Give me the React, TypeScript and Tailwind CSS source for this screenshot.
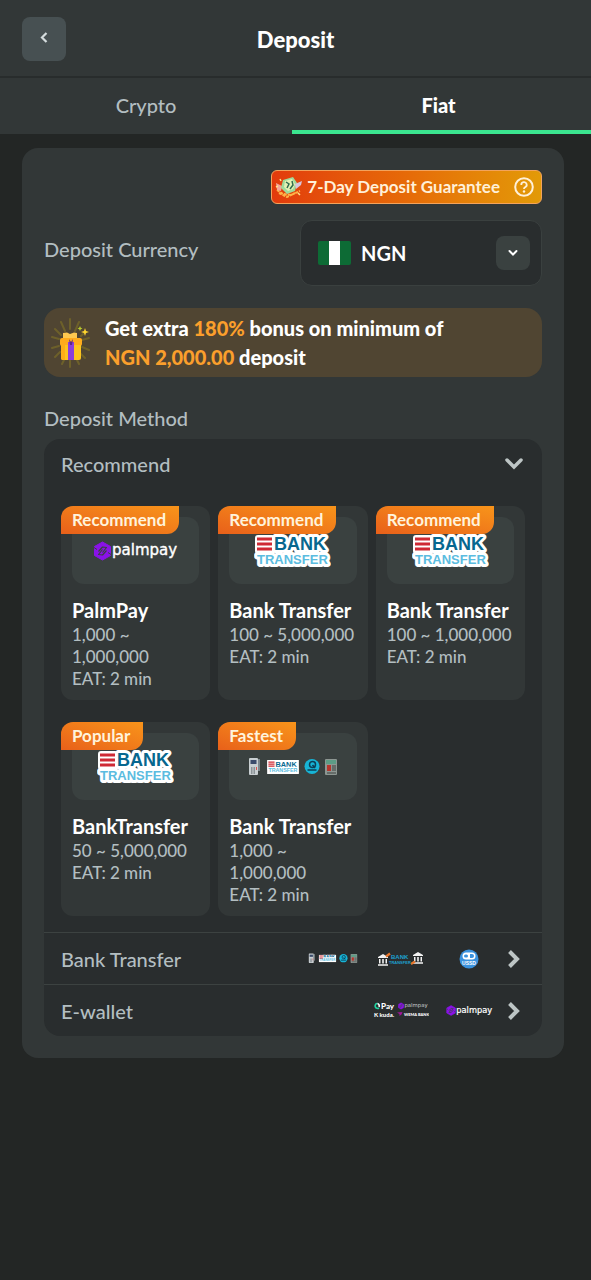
import React, { useState } from "react";

type LogoName = "palmpay" | "bank" | "channels" | "bankWire" | "ussd" | "wallets";

interface Method {
  id: number;
  tag: string;
  name: string;
  limits: string;
  eat: string;
  logo: LogoName;
}

const methods: Method[] = [
  { id: 1, tag: "Recommend", name: "PalmPay", limits: "1,000 ~ 1,000,000", eat: "2 min", logo: "palmpay" },
  { id: 2, tag: "Recommend", name: "Bank Transfer", limits: "100 ~ 5,000,000", eat: "2 min", logo: "bank" },
  { id: 3, tag: "Recommend", name: "Bank Transfer", limits: "100 ~ 1,000,000", eat: "2 min", logo: "bank" },
  { id: 4, tag: "Popular", name: "BankTransfer", limits: "50 ~ 5,000,000", eat: "2 min", logo: "bank" },
  { id: 5, tag: "Fastest", name: "Bank Transfer", limits: "1,000 ~ 1,000,000", eat: "2 min", logo: "channels" },
];

const groups: { name: string; logos: LogoName[] }[] = [
  { name: "Bank Transfer", logos: ["channels", "bankWire", "ussd"] },
  { name: "E-wallet", logos: ["wallets", "palmpay"] },
];

const PalmPayMark: React.FC = () => (
  <g>
    <path d="M8.5 1 16.5 5.5V14.5L8.5 19 .5 14.5V5.5Z" fill="#8a12e8" stroke="#8a12e8" strokeLinejoin="round" />
    <path
      d="M4.500 10.500 8.500 6 12.500 6.500 8.500 11.500M12.500 9.500 8.500 14 4.500 13.500 8.500 8.500"
      fill="none"
      stroke="#39413f"
      strokeWidth="1.200"
      strokeLinejoin="round"
    />
    <path d="M0 6.500 3 8.500M17 13.500 14 11.500" stroke="#39413f" strokeWidth="1" />
  </g>
);

const PalmPayLogo: React.FC<{ className: string }> = ({ className }) => (
  <svg viewBox="0 0 84 20" className={className} aria-label="palmpay">
    <PalmPayMark />
    <text x="18" y="14" fontSize="15" fontFamily="DejaVu Sans, sans-serif" fill="#fff" stroke="#fff" strokeWidth="0.400">
      palmpay
    </text>
  </svg>
);

const BankArt: React.FC = () => (
  <g fontFamily="Liberation Sans, sans-serif" fontWeight="700" stroke="#fff" strokeWidth="6" strokeLinejoin="round">
    <path d="M4 4H18V17H4Z" fill="#fff" />
    <text x="20" y="16" fontSize="18" fill="#07678f" paintOrder="stroke">BANK</text>
    <text x="3" y="30" fontSize="13" fill="#5bbce0" paintOrder="stroke">TRANSFER</text>
    <path d="M3 3.500H18V6.500H3ZM3 8.500H18V11.500H3ZM3 13.500H18V16.500H3Z" fill="#cf2a35" stroke="none" />
  </g>
);

const BankLogo: React.FC<{ className: string }> = ({ className }) => (
  <svg viewBox="0 0 77 34" className={className} aria-label="Bank Transfer">
    <BankArt />
  </svg>
);

const ChannelsLogo: React.FC<{ className: string }> = ({ className }) => (
  <svg viewBox="0 0 90 20" className={className} aria-hidden="true">
    <rect x="1" y="1" width="9" height="17" rx="1" fill="#c9cfd2" />
    <rect x="10" y="2" width="2" height="12" fill="#7d878c" />
    <rect x="2.500" y="3" width="6" height="4" fill="#3b4b6b" />
    <path d="M3 10H4.500V17H3ZM5.500 10H7V17H5.500Z" fill="#8b9397" />
    <path d="M8 10H9V13H8Z" fill="#d9534f" />
    <svg x="19" y="3" width="32" height="14" viewBox="0 0 77 34">
      <rect width="77" height="34" fill="#fff" />
      <BankArt />
    </svg>
    <circle cx="64" cy="9.500" r="7.500" fill="#17b4d6" />
    <circle cx="64.500" cy="7.500" r="3" fill="none" stroke="#0b3f57" strokeWidth="1.500" />
    <path d="M59.500 13H68.500M64.500 8 67 11" stroke="#0b3f57" strokeWidth="1.600" />
    <rect x="77" y="2" width="12" height="16" rx="1" fill="#8d9692" />
    <rect x="78" y="3" width="10" height="4" fill="#5c9c86" />
    <rect x="79" y="8" width="4" height="6" fill="#b5352c" />
    <path d="M84 9H88M84 11H88M84 13H88M79 16H88" stroke="#3c4241" strokeWidth="1" />
  </svg>
);

const Building: React.FC<{ x: number; y: number }> = ({ x, y }) => (
  <svg x={x} y={y} width="10" height="12" viewBox="0 0 10 12">
    <path d="M5 0 10 3V4H0V3ZM1 5H2.500V9.500H1ZM4.200 5H5.800V9.500H4.200ZM7.500 5H9V9.500H7.500ZM0 10.200H10V11.800H0Z" fill="#f3f3f3" />
  </svg>
);

const BankWireLogo: React.FC = () => (
  <svg viewBox="0 0 46 14" className="h-[14px] w-[46px]" aria-label="Bank Transfer">
    <Building x={0} y={2} />
    <Building x={35} y={0} />
    <path d="M8 4.500 12 1.500M33 12 37 9.500" stroke="#e8762c" strokeWidth="2.200" />
    <g fontFamily="Liberation Sans, sans-serif" fontWeight="700" fill="#1da0cf">
      <text x="13" y="7" fontSize="6">BANK</text>
      <text x="11" y="12" fontSize="4">TRANSFER</text>
    </g>
  </svg>
);

const UssdLogo: React.FC = () => (
  <svg viewBox="0 0 20 20" className="size-5" aria-label="USSD">
    <circle cx="10" cy="10" r="9.500" fill="#3a92de" />
    <rect x="3.500" y="3.500" width="13" height="7" rx="3.500" fill="#fff" />
    <rect x="5" y="5.500" width="4" height="3" rx="1.500" fill="#3a92de" />
    <path d="M11 5H13A2 2 0 0 1 13 9H11Z" fill="#3a92de" />
    <text x="10" y="16" fontSize="5" fontWeight="700" textAnchor="middle" fontFamily="Liberation Sans, sans-serif" fill="#fff">
      USSD
    </text>
  </svg>
);

const WalletsLogo: React.FC = () => (
  <svg viewBox="0 0 56 17" className="h-[17px] w-[56px]" aria-hidden="true">
    <path d="M4.500 1.500H4A2.500 2.500 0 1 0 6 6" fill="none" stroke="#20d3a0" strokeWidth="1.600" />
    <path d="M4.500 1.500A2.500 2.500 0 0 1 6 5" fill="none" stroke="#fff" strokeWidth="1.600" />
    <g fontFamily="Lato, sans-serif" fontWeight="900" fill="#fff">
      <text x="8" y="7" fontSize="8">Pay</text>
      <text x="1" y="15" fontSize="6">K kuda.</text>
      <text x="31" y="14" fontSize="4">WEMA BANK</text>
    </g>
    <svg x="25" y="0" width="30" height="8" viewBox="0 0 84 20">
      <PalmPayMark />
      <text x="18" y="14" fontSize="15" fontFamily="DejaVu Sans, sans-serif" fill="#c9cdd0">palmpay</text>
    </svg>
    <path d="M24 10.500 29.500 10 28.500 12.500 26.500 14V12Z" fill="#a3149b" />
  </svg>
);

const Logo: React.FC<{ name: LogoName; small?: boolean }> = ({ name, small }) => {
  switch (name) {
    case "palmpay":
      return <PalmPayLogo className={small ? "h-[11px] w-[47px]" : "h-[20px] w-[84px]"} />;
    case "bank":
      return <BankLogo className="h-[34px] w-[77px]" />;
    case "channels":
      return <ChannelsLogo className={small ? "h-[11px] w-[50px]" : "h-[20px] w-[90px]"} />;
    case "bankWire":
      return <BankWireLogo />;
    case "ussd":
      return <UssdLogo />;
    default:
      return <WalletsLogo />;
  }
};

const GiftIcon: React.FC = () => (
  <svg viewBox="0 0 40 52" className="h-[52px] w-10 shrink-0" aria-hidden="true">
    <g stroke="#817326" strokeWidth="2" strokeLinecap="round" opacity="0.600">
      <path d="M19 2V12M19 40V50M10 5 14 14M28 5 24 14M4 12 10 18M34 15 30 19M1 20 8 22M31 23 38 21M1 31 8 29M31 30 38 33M4 40 9 35M34 41 29 36M11 47 14 41M28 47 25 41" />
    </g>
    <path d="M12 16 16 15.500 19 17 23 15.500 26 16V22H12Z" fill="#ffc94f" />
    <rect x="9" y="21" width="22" height="8" rx="2" fill="#ffab1c" />
    <path d="M10 28H30V41Q30 43 28 43H12Q10 43 10 41Z" fill="#fdc41f" />
    <path d="M10 28H14V43H12Q10 43 10 41Z" fill="#ffae17" />
    <path d="M17 25H23V43H17Z" fill="#8b3fdb" />
    <path d="M18 22 20 25 22 22 21 28H19Z" fill="#5d2a8a" />
    <path d="M34 11 35 14 38 15 35 16 34 19 33 16 30 15 33 14Z" fill="#ffd62e" />
    <path d="M29 9 29.800 10.700 31.500 11.500 29.800 12.300 29 14 28.200 12.300 26.500 11.500 28.200 10.700Z" fill="#b8c92e" />
  </svg>
);

const CashIcon: React.FC = () => (
  <svg viewBox="0 0 28 22" className="h-[22px] w-7 shrink-0" aria-hidden="true">
    <path d="M2 14 8 18 16 19 25 15M4 17 12 21 20 17" fill="none" stroke="#ffb347" strokeWidth="2" strokeDasharray="3 1" />
    <path d="M1 7 7 10 6 15 2 14Z" fill="#f4a79a" />
    <path d="M8 4 18 1 22 7 20 15 12 18 6 12Z" fill="#9fdb9a" />
    <path d="M10 5 17 3 20 8 18 13 13 15 9 11Z" fill="#e4f2b5" />
    <path d="M11 6 14 8 12 12M17 5 18 9 15 13" fill="none" stroke="#2f6e4f" strokeWidth="1.500" />
    <path d="M20 8 27 5 26 9 21 13" fill="#d9c4d8" />
    <path d="M5 3 6 5M3 10 1 11M23 17 25 19" stroke="#ffe28a" strokeWidth="1.500" />
  </svg>
);

const ChevronRight: React.FC = () => (
  <svg viewBox="0 0 22 22" className="size-[22px]" aria-hidden="true">
    <path d="M6.500 3.500 14 11 6.500 18.500" fill="none" stroke="#bdc5c5" strokeWidth="4" />
  </svg>
);

const MethodCard: React.FC<{ method: Method }> = ({ method }) => (
  <button
    type="button"
    className="relative flex flex-col items-stretch rounded-xl bg-[#323737] px-[11px] pt-[11px] pb-[10px] text-left"
  >
    <span className="absolute top-0 left-0 h-7 rounded-tl-xl rounded-br-xl bg-gradient-to-tr from-[#e8601a] to-[#f8941a] pr-[13px] pl-[11px] text-[17px] leading-[27px] font-bold text-[#fff3dc]">
      {method.tag}
    </span>
    <span className="flex h-[67px] items-center justify-center rounded-xl bg-[#3a4140]">
      <Logo name={method.logo} />
    </span>
    <span className="mt-3 text-[20px] leading-7 font-bold whitespace-nowrap text-white">{method.name}</span>
    <span className="text-[17px] leading-[22px] font-medium text-[#b3bec1]">{method.limits}</span>
    <span className="text-[17px] leading-[22px] font-medium text-[#b3bec1]">EAT: {method.eat}</span>
  </button>
);

const App: React.FC = () => {
  const [tab, setTab] = useState("Fiat");
  const [currency, setCurrency] = useState("NGN");
  const [isOpen, setIsOpen] = useState(true);

  return (
    <div className="min-h-screen bg-[#232625] font-['Lato',sans-serif]">
      <header className="grid h-[78px] grid-cols-[44px_1fr_44px] items-center border-b-2 border-[#282c2c] bg-[#323737] px-[22px] pt-[2px]">
        <button type="button" aria-label="Back" className="flex size-11 items-center justify-center rounded-lg bg-[#475052]">
          <svg viewBox="0 0 12 14" className="h-[14px] w-3" aria-hidden="true">
            <path d="M8.500 1 4 5.500 8.500 10" fill="none" stroke="#d5dcde" strokeWidth="2.200" />
          </svg>
        </button>
        <h1 className="pt-[2px] text-center text-[22px] leading-7 font-black text-white">Deposit</h1>
      </header>

      <nav className="grid grid-cols-[292fr_299fr] bg-[#323737]">
        {["Crypto", "Fiat"].map((name) => (
          <button
            key={name}
            type="button"
            onClick={() => setTab(name)}
            className={
              tab === name
                ? "h-14 border-b-4 border-[#3be58f] pt-[2px] pr-1.5 text-[20px] font-black text-white"
                : "h-14 border-b-4 border-transparent pt-[2px] text-[20px] font-medium text-[#b3bec1]"
            }
          >
            {name}
          </button>
        ))}
      </nav>

      <main className="pt-[14px] pr-[27px] pb-8 pl-[22px]">
        <div className="flex flex-col rounded-2xl bg-[#323737] p-[22px]">
          <button
            type="button"
            className="flex h-[34px] items-center self-end rounded-md border border-[#f3a35c] bg-gradient-to-r from-[#e23a0c] via-[#e66a08] to-[#e29a08] pr-[7px] pl-[3px] text-[17px] font-bold text-[#fff0d8]"
          >
            <CashIcon />
            <span className="mr-[14px] ml-1">7-Day Deposit Guarantee</span>
            <svg viewBox="0 0 20 20" className="size-5" aria-hidden="true">
              <circle cx="10" cy="10" r="8.800" fill="none" stroke="#fff0d8" strokeWidth="2" />
              <path d="M7.300 8A2.700 2.700 0 1 1 11 10.300Q10 10.800 10 12" fill="none" stroke="#fff0d8" strokeWidth="1.800" />
              <circle cx="10" cy="14.500" r="1.200" fill="#fff0d8" />
            </svg>
          </button>

          <div className="mt-4 flex items-center justify-between">
            <label htmlFor="currency" className="pb-2 text-[20px] font-medium text-[#b3bec1]">
              Deposit Currency
            </label>
            <div className="flex h-[66px] w-[242px] items-center rounded-xl border border-[#3a403f] bg-[#292d2e] pr-[11px] pl-[17px]">
              <svg viewBox="0 0 33 24" className="h-6 w-[33px] shrink-0" aria-hidden="true">
                <rect width="33" height="24" rx="2" fill="#0d6b35" />
                <rect x="11" width="11" height="24" fill="#fff" />
              </svg>
              <select
                id="currency"
                value={currency}
                onChange={(e) => setCurrency(e.target.value)}
                className="ml-[10px] min-w-0 flex-1 appearance-none bg-transparent text-[20px] font-bold text-white outline-none"
              >
                <option value="NGN">NGN</option>
              </select>
              <span className="flex size-[34px] items-center justify-center rounded-lg bg-[#3a4140]">
                <svg viewBox="0 0 10 8" className="h-2 w-[10px]" aria-hidden="true">
                  <path d="M1.500 2 5 5.500 8.500 2" fill="none" stroke="#fff" strokeWidth="2" strokeLinecap="round" />
                </svg>
              </span>
            </div>
          </div>

          <div className="mt-[22px] flex h-[69px] items-center rounded-2xl bg-[#504532] pl-[7px]">
            <GiftIcon />
            <p className="ml-[14px] text-[20px] leading-[29px] font-black text-white">
              Get extra <span className="text-[#fb9f2c]">180%</span> bonus on minimum of
              <br />
              <span className="text-[#fb9f2c]">NGN 2,000.00</span> deposit
            </p>
          </div>

          <h2 className="mt-[27px] text-[20px] leading-7 font-medium text-[#b3bec1]">Deposit Method</h2>

          <div className="mt-[7px] overflow-hidden rounded-2xl bg-[#292d2e] text-[20px] font-medium text-[#b3bec1]">
            <button
              type="button"
              aria-expanded={isOpen}
              onClick={() => setIsOpen(!isOpen)}
              className="flex h-[52px] w-full items-center justify-between px-[17px] pb-[2px]"
            >
              <span>Recommend</span>
              <svg viewBox="0 0 22 22" className="size-[22px]" aria-hidden="true">
                <path d="M4 7 11 14 18 7" fill="none" stroke="#bdc5c5" strokeWidth="3.500" strokeLinecap="round" />
              </svg>
            </button>

            {isOpen && (
              <div className="grid grid-cols-3 gap-x-2 gap-y-[22px] px-[17px] pt-[15px] pb-4">
                {methods.map((method) => (
                  <MethodCard key={method.id} method={method} />
                ))}
              </div>
            )}

            {groups.map((group) => (
              <button
                key={group.name}
                type="button"
                className="flex h-[52px] w-full items-center border-t border-[#3c4241] px-[17px]"
              >
                <span className="flex-1 text-left">{group.name}</span>
                {group.logos.map((logo) => (
                  <span key={logo} className="flex w-[68px] justify-center">
                    <Logo name={logo} small />
                  </span>
                ))}
                <ChevronRight />
              </button>
            ))}
          </div>
        </div>
      </main>
    </div>
  );
};

export default App;
